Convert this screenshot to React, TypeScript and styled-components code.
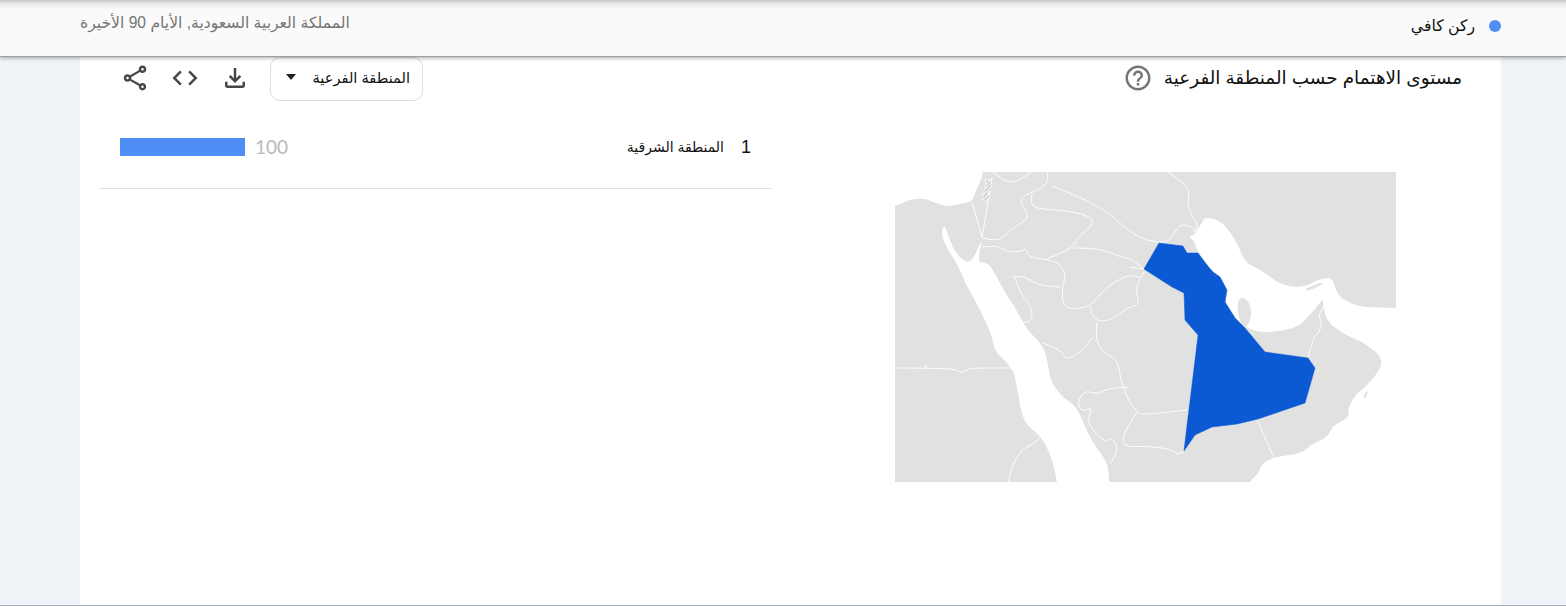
import React from "react";
import styled, { createGlobalStyle } from "styled-components";

const Global = createGlobalStyle`
  html, body { margin: 0; padding: 0; height: 606px; overflow: hidden; background: #f0f4f9; }
  body { font-family: "Liberation Sans", "DejaVu Sans", sans-serif; }
`;

const Page = styled.div`
  box-sizing: border-box;
  height: 606px;
  display: flex;
  flex-direction: column;
  direction: rtl;
  overflow: hidden;
  border-bottom: 1px solid #aab2b8;
`;

const TopBar = styled.header`
  flex: 0 0 57px;
  box-sizing: border-box;
  display: flex;
  justify-content: space-between;
  align-items: center;
  padding: 0 65px 5px 80px;
  background: linear-gradient(#c4c5c6 0, #ececec 4px, #fafafa 10px);
  border-bottom: 1px solid #9f9f9f;
  box-shadow: 0 1px 4px rgba(60, 64, 67, 0.45);
  position: relative;
  z-index: 2;
`;

const Term = styled.div`
  display: flex;
  align-items: center;
  gap: 14px;
  font-size: 15.7px;
  color: #111;
`;

const Dot = styled.span`
  width: 12px;
  height: 12px;
  border-radius: 50%;
  background: #4f8ef5;
`;

const Context = styled.div`
  font-size: 15.6px;
  color: #757575;
  margin-bottom: 5px;
`;

const Card = styled.main`
  flex: 1;
  margin: 0 65px 0 80px;
  background: #fff;
  border-radius: 0 0 3px 3px;
  display: flex;
  flex-direction: column;
`;

const CardHeader = styled.div`
  display: flex;
  justify-content: space-between;
  align-items: center;
  height: 44px;
  padding: 0 39px 0 40px;
`;

const TitleGroup = styled.div`
  display: flex;
  align-items: center;
  gap: 11px;
  margin-bottom: 2px;
`;

const Title = styled.h2`
  margin: 0;
  font-size: 18.4px;
  font-weight: 400;
  color: #111;
`;

const Toolbar = styled.div`
  display: flex;
  align-items: center;
  gap: 20px;
`;

const ToolIcon = styled.span`
  display: block;
  margin-bottom: 2px;
`;

const SelectBox = styled.div`
  box-sizing: border-box;
  width: 153px;
  height: 44px;
  display: flex;
  justify-content: space-between;
  align-items: center;
  padding: 0 12px 4px 15px;
  border: 1px solid #dadce0;
  border-radius: 10px;
  font-size: 14.6px;
  color: #111;
`;

const Arrow = styled.span`
  width: 0;
  height: 0;
  border-left: 5px solid transparent;
  border-right: 5px solid transparent;
  border-top: 6px solid #202124;
`;

const Body = styled.div`
  flex: 1;
  display: grid;
  grid-template-columns: 729px 692px;
`;

const MapColumn = styled.div`
  padding: 71px 105px 0 123px;
`;

const MapSvg = styled.svg`
  display: block;
  width: 501px;
  height: 310px;
`;

const ListColumn = styled.div`
  padding: 0 0 0 19px;
`;

const Row = styled.div`
  display: flex;
  align-items: center;
  height: 87px;
  box-sizing: border-box;
  padding: 4px 21px 0 21px;
  margin-top: 1px;
  border-bottom: 1px solid #e0e0e0;
`;

const Rank = styled.span`
  font-size: 18px;
  color: #111;
  margin-left: 17px;
  font-family: "Liberation Sans", sans-serif;
`;

const RegionName = styled.span`
  flex: 1;
  font-size: 14px;
  color: #111;
`;

const Score = styled.span`
  font-family: "Lato", "Roboto", sans-serif;
  font-size: 19px;
  line-height: 18px;
  color: #b9b9b9;
  margin-left: 10px;
`;

const Bar = styled.span`
  height: 18px;
  background: #4f8ef5;
`;

const Icon = ({ d, size = 30, color = "#444746" }: { d: string; size?: number; color?: string }) => (
  <svg width={size} height={size} viewBox="0 0 24 24" fill={color} style={{ display: "block" }}>
    <path d={d} />
  </svg>
);

const ICONS = {
  help: "M11 18h2v-2h-2v2zm1-16C6.48 2 2 6.48 2 12s4.48 10 10 10 10-4.48 10-10S17.52 2 12 2zm0 18c-4.41 0-8-3.59-8-8s3.59-8 8-8 8 3.59 8 8-3.59 8-8 8zm0-14c-2.21 0-4 1.79-4 4h2c0-1.1.9-2 2-2s2 .9 2 2c0 2-3 1.75-3 5h2c0-2.25 3-2.5 3-5 0-2.21-1.79-4-4-4z",
  download: "M18 15v3H6v-3H4v3c0 1.1.9 2 2 2h12c1.1 0 2-.9 2-2v-3h-2zm-1-4l-1.41-1.41L13 12.17V4h-2v8.17L8.41 9.59 7 11l5 5 5-5z",
  code: "M9.4 16.6L4.8 12l4.6-4.6L8 6l-6 6 6 6 1.4-1.4zm5.2 0l4.6-4.6-4.6-4.6L16 6l6 6-6 6-1.4-1.4z",
  share: "M18 16.08c-.76 0-1.44.3-1.96.77L8.91 12.7c.05-.23.09-.46.09-.7s-.04-.47-.09-.7l7.05-4.11c.54.5 1.25.81 2.04.81 1.66 0 3-1.34 3-3s-1.34-3-3-3-3 1.34-3 3c0 .24.04.47.09.7L8.04 9.81C7.5 9.31 6.79 9 6 9c-1.66 0-3 1.34-3 3s1.34 3 3 3c.79 0 1.5-.31 2.04-.81l7.12 4.16c-.05.21-.08.43-.08.65 0 1.61 1.31 2.92 2.92 2.92s2.92-1.31 2.92-2.92-1.31-2.92-2.92-2.92zM18 4c.55 0 1 .45 1 1s-.45 1-1 1-1-.45-1-1 .45-1 1-1zM6 13c-.55 0-1-.45-1-1s.45-1 1-1 1 .45 1 1-.45 1-1 1zm12 7.02c-.55 0-1-.45-1-1s.45-1 1-1 1 .45 1 1-.45 1-1 1z",
};

// Turns a list of map points into a softly curved outline, so coasts and borders are not faceted.
const smooth = (points: string, closed: boolean) => {
  const pts = points.split(" ").map((p) => p.split(",").map(Number));
  const mid = (a: number[], b: number[]) => `${(a[0] + b[0]) / 2},${(a[1] + b[1]) / 2}`;
  if (pts.length < 3) return `M${points.replace(" ", "L")}`;
  if (closed) {
    let d = `M${mid(pts[pts.length - 1], pts[0])}`;
    pts.forEach((p, i) => {
      d += `Q${p[0]},${p[1]} ${mid(p, pts[(i + 1) % pts.length])}`;
    });
    return d + "Z";
  }
  let d = `M${pts[0][0]},${pts[0][1]}`;
  for (let i = 1; i < pts.length - 1; i++) {
    d += `Q${pts[i][0]},${pts[i][1]} ${mid(pts[i], pts[i + 1])}`;
  }
  const last = pts[pts.length - 1];
  return d + `L${last[0]},${last[1]}`;
};

const SEAS = [
  "700,0 983,0 983,172 982,177 977,188 972,202 963,203 947,207 933,202 923,198 907,200 895,208 700,222",
  "943,226 941,235 948,250 958,265 966,285 975,300 985,320 992,337 995,352 1013,368 1017,387 1023,423 1040,435 1050,453 1055,472 1057,482 1057,490 1057,700 1110,700 1110,490 1109,482 1108,463 1093,443 1085,427 1077,407 1062,397 1050,380 1048,363 1043,345 1027,330 1015,307 1005,293 995,273 987,262 977,263 983,236 972,263 962,260 952,247 946,228",
  "1194,240 1188,237 1195,235 1198,228 1203,222 1203,218 1213,218 1225,225 1237,242 1245,263 1258,268 1270,277 1282,285 1302,288 1322,278 1333,278 1337,295 1350,303 1363,307 1396,308 1700,310 1700,800 1200,800 1247,482 1258,475 1262,463 1275,457 1303,453 1310,445 1328,437 1333,425 1349,418 1348,407 1357,393 1370,383 1386,360 1363,342 1350,337 1338,330 1328,322 1323,308 1323,298 1320,303 1308,317 1297,328 1272,332 1258,332 1245,327 1235,318 1225,302 1227,290 1220,277 1213,272 1207,265 1198,253",
];

const QATAR = "1243,296 1251,305 1251,320 1245,329 1239,320 1237,302";
const QESHM = "1305,289 1314,285 1322,282 1323,284 1315,288 1307,291";
const ISLAND = "1363,397 1367,390 1368,393 1365,399";

const REGION =
  "1159,243 1183,246 1187,253 1198,253 1207,265 1213,272 1220,277 1227,290 1225,302 1235,318 1245,328 1265,352 1308,358 1315,368 1305,403 1258,419 1237,424 1212,427 1195,435 1184,451 1188,417 1198,335 1185,320 1184,293 1172,287 1144,269";

const BORDERS = [
  "972,202 982,237",
  "992,177 982,238",
  "993,172 1002,180 1015,183 1030,173",
  "1047,172 1052,185 1015,198 1032,217 1012,228 1000,241 982,238",
  "1052,186 1097,203 1130,232 1147,241 1170,243 1178,225 1190,225 1195,232",
  "1168,172 1183,182 1190,192 1187,205 1193,218 1198,225 1195,232",
  "1032,193 1030,203 1037,209 1063,210 1087,215 1095,223 1077,238 1073,248 1047,259",
  "982,247 997,245 1007,252 1020,252 1027,248 1028,257 1043,259 1057,262 1062,268 1066,277 1062,287 1063,310 1090,307 1098,297 1107,287 1127,275 1140,277",
  "1073,248 1100,248 1120,257 1130,258 1144,269",
  "1012,277 1023,275 1037,285 1060,287",
  "1015,278 1020,293 1032,307 1032,320 1023,323",
  "1090,307 1093,322 1113,320 1127,307 1140,305 1135,288 1144,272",
  "1097,322 1095,337 1102,352 1118,360 1120,378 1128,400 1137,412 1142,415 1187,410",
  "1043,343 1062,350 1065,360 1080,353 1093,337",
  "1128,387 1107,388 1098,395 1085,390 1077,402 1082,412 1093,407 1087,418 1092,430 1107,443 1110,437 1118,445 1115,457 1110,463",
  "1137,412 1123,433 1123,447 1143,446 1172,449 1177,455 1184,451",
  "895,368 955,368 960,373 968,370 970,368 1013,368",
  "925,368 927,364",
  "1008,482 1015,453 1037,442 1040,437",
  "1257,420 1274,458",
  "1308,357 1313,337 1320,332 1322,320 1318,317 1325,303",
  "1144,269 1130,267",
  "1188,417 1198,335",
];

const RegionMap = () => (
  <MapSvg viewBox="895 172 501 310" aria-label="map">
    <defs>
      <pattern id="hatch" width="3" height="3" patternUnits="userSpaceOnUse" patternTransform="rotate(45)">
        <rect width="3" height="3" fill="#f4f4f4" />
        <rect width="1.3" height="3" fill="#c4c4c4" />
      </pattern>
    </defs>
    <rect x="895" y="172" width="501" height="310" fill="#e1e1e1" />
    {SEAS.map((p) => (
      <path key={p} d={smooth(p, true)} fill="#fff" />
    ))}
    <path d={smooth(QATAR, true)} fill="#e1e1e1" />
    <path d={smooth(ISLAND, true)} fill="#e1e1e1" />
    <path d={smooth(QESHM, true)} fill="#e1e1e1" />
    <g fill="none" stroke="#fff" strokeWidth="0.9" strokeLinejoin="round">
      {BORDERS.map((p) => (
        <path key={p} d={smooth(p, false)} />
      ))}
    </g>
    <polygon points="985,179 991,180 992,190 988,192 990,197 986,202 982,200 984,192 986,186" fill="url(#hatch)" stroke="#fff" strokeWidth="0.6" />
    <polygon points={REGION} fill="#0b5ad4" strokeLinejoin="round" stroke="#0b5ad4" strokeWidth="0.5" />
    <g fill="#fff">
      <circle cx="1097" cy="457" r="0.8" />
      <circle cx="1066" cy="473" r="1.2" />
      <circle cx="1061" cy="478" r="1" />
    </g>
  </MapSvg>
);

export default function App() {
  return (
    <>
      <Global />
      <Page>
        <TopBar>
          <Term>
            <Dot />
            <span>ركن كافي</span>
          </Term>
          <Context>المملكة العربية السعودية, الأيام 90 الأخيرة</Context>
        </TopBar>
        <Card>
          <CardHeader>
            <TitleGroup>
              <Title>مستوى الاهتمام حسب المنطقة الفرعية</Title>
              <Icon d={ICONS.help} color="#757575" />
            </TitleGroup>
            <Toolbar>
              <SelectBox>
                <span>المنطقة الفرعية</span>
                <Arrow />
              </SelectBox>
              <ToolIcon><Icon d={ICONS.download} /></ToolIcon>
              <ToolIcon><Icon d={ICONS.code} /></ToolIcon>
              <ToolIcon><Icon d={ICONS.share} /></ToolIcon>
            </Toolbar>
          </CardHeader>
          <Body>
            <MapColumn>
              <RegionMap />
            </MapColumn>
            <ListColumn>
              <Row>
                <Rank>1</Rank>
                <RegionName>المنطقة الشرقية</RegionName>
                <Score>100</Score>
                <Bar style={{ width: 125 }} />
              </Row>
            </ListColumn>
          </Body>
        </Card>
      </Page>
    </>
  );
}
